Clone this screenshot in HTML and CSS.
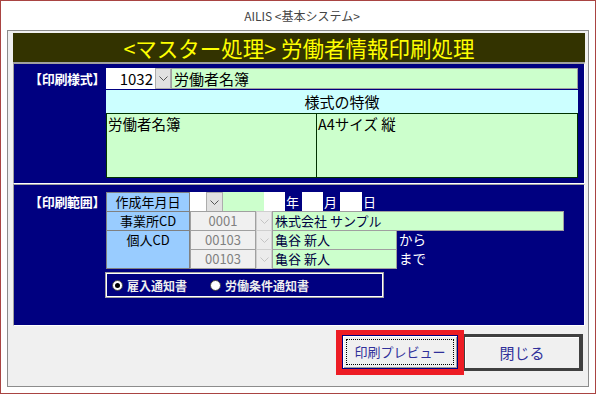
FILE: index.html
```html
<!DOCTYPE html>
<html>
<head>
  <title>AILIS &lt;基本システム&gt;</title>
  <link rel="stylesheet" href="styles.css">
</head>
<body>
  <div class="window">
    <div class="titlebar">AILIS &lt;基本システム&gt;</div>
    <div class="frame">
      <div class="banner">&lt;マスター処理&gt; 労働者情報印刷処理</div>

      <!-- 印刷様式 -->
      <div class="panel panel-style">
        <div class="panel-label">【印刷様式】</div>
        <div class="panel-body">
          <div class="combo-row">
            <div class="combo-value">1032</div>
            <div class="drop"><svg width="9" height="5" viewBox="0 0 9 5"><path d="M0.5 0.5 L4.5 4.5 L8.5 0.5" fill="none" stroke="#555"/></svg></div>
            <div class="field green style-name">労働者名簿</div>
          </div>
          <div class="feature-head">様式の特徴</div>
          <div class="feature-boxes">
            <div class="feature feature-left">労働者名簿</div>
            <div class="feature feature-right">A4サイズ 縦</div>
          </div>
        </div>
      </div>

      <!-- 印刷範囲 -->
      <div class="panel panel-range">
        <div class="panel-label">【印刷範囲】</div>
        <div class="panel-body">
          <div class="range-grid">
            <div class="cell-label">作成年月日</div>
            <div class="row">
              <div class="white w16"></div>
              <div class="drop w17"><svg width="9" height="5" viewBox="0 0 9 5"><path d="M0.5 0.5 L4.5 4.5 L8.5 0.5" fill="none" stroke="#555"/></svg></div>
              <div class="plain-green w41"></div>
              <div class="white w21"></div>
              <div class="unit">年</div>
              <div class="white w21"></div>
              <div class="unit">月</div>
              <div class="white w22"></div>
              <div class="unit">日</div>
            </div>

            <div class="cell-label">事業所CD</div>
            <div class="row">
              <div class="code">0001</div>
              <div class="drop disabled"><svg width="9" height="5" viewBox="0 0 9 5"><path d="M0.5 0.5 L4.5 4.5 L8.5 0.5" fill="none" stroke="#c4c4c4"/></svg></div>
              <div class="field green company">株式会社 サンプル</div>
            </div>

            <div class="cell-label tall">個人CD</div>
            <div class="row">
              <div class="code">00103</div>
              <div class="drop disabled"><svg width="9" height="5" viewBox="0 0 9 5"><path d="M0.5 0.5 L4.5 4.5 L8.5 0.5" fill="none" stroke="#c4c4c4"/></svg></div>
              <div class="field green person">亀谷 新人</div>
              <div class="range-word">から</div>
            </div>
            <div class="row">
              <div class="code">00103</div>
              <div class="drop disabled"><svg width="9" height="5" viewBox="0 0 9 5"><path d="M0.5 0.5 L4.5 4.5 L8.5 0.5" fill="none" stroke="#c4c4c4"/></svg></div>
              <div class="field green person">亀谷 新人</div>
              <div class="range-word">まで</div>
            </div>
          </div>

          <div class="radio-box">
            <label class="radio"><span class="dot checked"></span>雇入通知書</label>
            <label class="radio"><span class="dot"></span>労働条件通知書</label>
          </div>
        </div>
      </div>

      <div class="actions">
        <div class="highlight">
          <button class="btn btn-preview"><span class="focus">印刷プレビュー</span></button>
        </div>
        <button class="btn btn-close">閉じる</button>
      </div>
    </div>
  </div>
</body>
</html>
```

FILE: styles.css
```css
body {
  margin: 0;
  font-family: "Noto Sans CJK JP", "Noto Sans", sans-serif;
}
.window {
  width: 596px;
  height: 394px;
  box-sizing: border-box;
  border: 1px solid #a94442;
  background-color: #fff;
}
.titlebar {
  height: 29px;
  line-height: 29px;
  padding-left: 8px;
  text-align: center;
  font-size: 12px;
  color: #444;
}
.frame {
  margin: 0 6px;
  height: 357px;
  box-sizing: border-box;
  border: 1px solid #8c8c8c;
  background-color: #f0f0f0;
  padding: 2px 3px 0 5px;
}
.banner {
  height: 30px;
  box-sizing: border-box;
  border-bottom: 1px solid #a0a0a0;
  background-color: #333300;
  color: #ffff00;
  font-size: 21.5px;
  line-height: 29px;
  text-align: center;
}

/* navy panels */
.panel {
  display: flex;
  background-color: #000080;
  border: 1px solid;
  border-color: #a0a0a0 #fff #fff #a0a0a0;
  padding-right: 6px;
}
.panel-style {
  padding-top: 4px;
  padding-bottom: 5px;
}
.panel-range {
  padding-top: 7px;
  padding-bottom: 27px;
}
.panel-label {
  width: 92px;
  box-sizing: border-box;
  padding-left: 15px;
  color: #fff;
  font-size: 13px;
  font-weight: bold;
  line-height: 21px;
  white-space: nowrap;
  letter-spacing: -0.3px;
}
.panel-range .panel-label {
  line-height: 19px;
}
.panel-body {
  flex: 1;
}

.combo-row {
  display: flex;
  height: 21px;
}
.combo-value {
  width: 49px;
  box-sizing: border-box;
  background-color: #fff;
  text-align: right;
  padding-right: 2px;
  font-size: 15px;
  line-height: 21px;
}
.drop {
  width: 16px;
  box-sizing: border-box;
  background-color: #e1e1e1;
  border: 1px solid #adadad;
  display: flex;
  align-items: center;
  justify-content: center;
}
.drop.disabled {
  background-color: #ececec;
  border-color: #cfcfcf;
}
.field {
  box-sizing: border-box;
  border: 1px solid #a0a0a0;
  padding-left: 2px;
  color: #000;
  white-space: nowrap;
}
.green {
  background-color: #ccffcc;
}
.style-name {
  flex: 1;
  font-size: 15px;
  line-height: 19px;
}
.feature-head {
  margin-top: 1px;
  height: 23px;
  background-color: #ccffff;
  text-align: center;
  font-size: 15px;
  line-height: 23px;
}
.feature-boxes {
  display: flex;
  height: 65px;
}
.feature {
  box-sizing: border-box;
  background-color: #ccffcc;
  border: 1px solid #003300;
  font-size: 14.5px;
  line-height: 20px;
  padding-left: 1px;
}
.feature-left {
  width: 211px;
}
.feature-right {
  flex: 1;
  border-left: none;
}

/* range table */
.range-grid {
  display: grid;
  grid-template-columns: 84px 1fr;
  grid-template-rows: 19px 19px 19px 20px;
}
.cell-label {
  height: 20px;
  box-sizing: border-box;
  background-color: #99ccff;
  border: 1px solid #808080;
  text-align: center;
  font-size: 13px;
  line-height: 18px;
}
.cell-label.tall {
  grid-row: span 2;
  height: 39px;
}
.row {
  display: flex;
  height: 20px;
}
.white {
  background-color: #fff;
}
.plain-green {
  background-color: #ccffcc;
}
.w16 { width: 16px; }
.w17 { width: 17px; }
.w21 { width: 21px; }
.w22 { width: 22px; }
.w41 { width: 41px; }
.unit {
  width: 17px;
  padding-left: 1px;
  box-sizing: border-box;
  color: #fff;
  font-size: 13px;
  line-height: 20px;
}
.code {
  width: 66px;
  box-sizing: border-box;
  background-color: #f0f0f0;
  border: 1px solid #a0a0a0;
  color: #808080;
  text-align: center;
  font-size: 13px;
  line-height: 18px;
}
.company,
.person {
  font-size: 13px;
  line-height: 18px;
  color: #000040;
}
.company {
  width: 292px;
}
.person {
  width: 125px;
}
.range-word {
  padding-left: 2px;
  color: #fff;
  font-size: 13.5px;
  line-height: 19px;
}

.radio-box {
  margin: 3px 0 0 -1px;
  width: 279px;
  height: 26px;
  box-sizing: border-box;
  border: 1px solid #a0a0a0;
  box-shadow: inset 0 0 0 1px #fff;
  display: flex;
  align-items: center;
  padding-left: 6px;
  gap: 23px;
}
.radio {
  display: flex;
  align-items: center;
  gap: 4px;
  color: #eee;
  font-size: 12px;
  font-weight: bold;
}
.dot {
  width: 11px;
  height: 11px;
  box-sizing: border-box;
  border-radius: 50%;
  background-color: #fff;
  border: 1px solid #404040;
  position: relative;
}
.dot.checked::after {
  content: "";
  position: absolute;
  left: 2px;
  top: 2px;
  width: 5px;
  height: 5px;
  border-radius: 50%;
  background-color: #000;
}

/* buttons */
.actions {
  display: flex;
  justify-content: flex-end;
  align-items: center;
  padding-top: 4px;
  padding-right: 2px;
}
.highlight {
  border: solid #ed1c24;
  border-width: 5px 6px 6px 6px;
}
.btn {
  font-family: "Noto Sans CJK JP", sans-serif;
  background-color: #f0f0f0;
  color: #30309a;
  padding: 0;
  box-sizing: border-box;
}
.btn-preview {
  display: block;
  width: 116px;
  height: 34px;
  border: 1px solid #000080;
  box-shadow: inset 1px 1px 0 #fff, inset -1px -1px 0 #a0a0a0;
  font-size: 13px;
  padding: 3px;
}
.focus {
  display: block;
  height: 100%;
  box-sizing: border-box;
  border: 1px dotted #000;
  line-height: 24px;
}
.btn-close {
  width: 119px;
  height: 37px;
  border: solid #404040;
  border-width: 3px 4px 3px 1px;
  box-shadow: inset 1px 1px 0 #fff;
  font-size: 15px;
  line-height: 28px;
}
```
